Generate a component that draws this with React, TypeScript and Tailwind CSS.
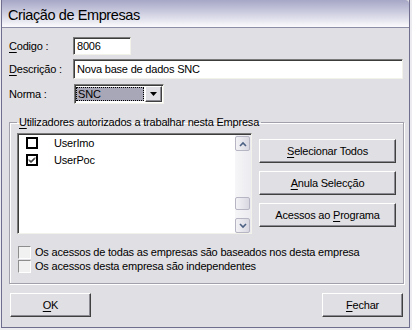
const sunken =
  'border border-t-[#7a7a7a] border-l-[#7a7a7a] border-r-[#f2f1ea] border-b-[#f2f1ea] shadow-[inset_1px_1px_0_#3c3c3c]'
const raised =
  'border border-t-white border-l-white border-r-[#404040] border-b-[#404040] shadow-[inset_-1px_-1px_0_#8c8b94]'

function Mn({ children }: { children: React.ReactNode }) {
  return <span className="underline underline-offset-[2px]">{children}</span>
}

function Btn({ children, className = '' }: { children: React.ReactNode; className?: string }) {
  return (
    <button className={`flex h-[24px] items-center justify-center bg-[#e0dfe3] ${raised} ${className}`}>
      {children}
    </button>
  )
}

function ListCheck({ checked }: { checked?: boolean }) {
  return (
    <span className="flex h-[12px] w-[12px] items-center justify-center border-2 border-black bg-white">
      {checked && (
        <svg width="8" height="8" viewBox="0 0 8 8">
          <path d="M1 3.5 L3 5.5 L7 1.5 M1 4.5 L3 6.5 L7 2.5" stroke="black" strokeWidth="1" fill="none" />
        </svg>
      )}
    </span>
  )
}

function Chevron({ up }: { up?: boolean }) {
  return (
    <svg width="8" height="6" viewBox="0 0 8 6">
      <path
        d={up ? 'M1 5 L4 2 L7 5' : 'M1 1 L4 4 L7 1'}
        stroke="#4d6185"
        strokeWidth="1.6"
        fill="none"
      />
    </svg>
  )
}

function ScrollBtn({ up }: { up?: boolean }) {
  return (
    <div className="flex h-[15px] w-[15px] items-center justify-center rounded-[2px] border border-[#b6b5c4] bg-linear-to-r from-[#f3f3f6] to-[#d9d8e2]">
      <Chevron up={up} />
    </div>
  )
}

function Check({ label }: { label: string }) {
  return (
    <label className="flex h-[14px] items-center gap-[4px]">
      <span className="h-[13px] w-[13px] border border-t-[#8d8d8d] border-l-[#8d8d8d] border-r-white border-b-white bg-[#f1f1f1]" />
      <span className="leading-[13px]">{label}</span>
    </label>
  )
}

export default function App() {
  return (
    <div className="h-[330px] w-[412px] bg-[#ecebf0] font-['Liberation_Sans',Arial,sans-serif] text-[11px] tracking-[-0.2px] text-black">
      <div className="ml-[1px] flex h-[328px] w-[409px] flex-col border-x border-b border-[#6f6e8e] bg-[#e0dfe3]">
        {/* title bar */}
        <div className="h-[28px] shrink-0 rounded-tr-[4px] border-b border-[#8e8da6] bg-linear-to-b from-[#a6a6c6] to-[#fbfbfd] pl-[6px] pt-[6px] text-[14.5px] leading-[18px] tracking-[-0.4px]">
          Criação de Empresas
        </div>

        <div className="flex flex-col pl-[7px]">
          <div className="mt-[9px] flex items-center">
            <span className="w-[64px]">
              <Mn>C</Mn>odigo :
            </span>
            <div className={`h-[18px] w-[58px] bg-white pl-[3px] leading-[16px] ${sunken}`}>8006</div>
          </div>

          <div className="mt-[4px] flex items-center">
            <span className="w-[64px]">
              <Mn>D</Mn>escrição :
            </span>
            <div className={`h-[20px] w-[330px] bg-white pl-[3px] leading-[18px] ${sunken}`}>
              Nova base de dados SNC
            </div>
          </div>

          <div className="mt-[5px] flex items-center">
            <span className="w-[65px]">Norma :</span>
            <div className={`flex h-[20px] w-[90px] items-center gap-[1px] bg-white py-[1px] pl-[1px] pr-[1px] ${sunken}`}>
              <div className="h-[14px] flex-1 border border-dotted border-black bg-[#a7a7b8] pl-[1px] leading-[12px]">
                SNC
              </div>
              <div className={`flex h-[16px] w-[17px] items-center justify-center bg-[#e0dfe3] ${raised}`}>
                <svg width="7" height="4" viewBox="0 0 7 4">
                  <path d="M0 0 H7 L3.5 4 Z" fill="black" />
                </svg>
              </div>
            </div>
          </div>

          <fieldset className="mt-[12px] w-[393px] border border-[#a2a1ab] px-[7px] pb-[10px] shadow-[inset_1px_1px_0_white,1px_1px_0_white]">
            <legend className="px-[2px] leading-[13px]">
              <Mn>U</Mn>tilizadores autorizados a trabalhar nesta Empresa
            </legend>
            <div className="mt-[4px] flex">
              <div className={`flex h-[101px] w-[235px] bg-white ${sunken} border-t-[#6a6a6a] shadow-[inset_1px_1px_0_#000]`}>
                <div className="flex flex-1 flex-col pl-[8px] pt-[3px]">
                  <div className="flex h-[17px] items-start">
                    <ListCheck />
                    <span className="ml-[16px] leading-[12px]">UserImo</span>
                  </div>
                  <div className="flex h-[17px] items-start">
                    <ListCheck checked />
                    <span className="ml-[16px] leading-[12px]">UserPoc</span>
                  </div>
                </div>
                <div className="mt-[1px] flex w-[16px] flex-col items-start bg-linear-to-r from-[#f6f6f8] to-[#ebebf0]">
                  <div className="mt-[1px]">
                    <ScrollBtn up />
                  </div>
                  <div className="flex-1" />
                  <div className="mb-[8px] h-[13px] w-[15px] rounded-[2px] border border-[#b6b5c4] bg-linear-to-r from-[#f3f3f6] to-[#d9d8e2]" />
                  <ScrollBtn />
                </div>
              </div>
              <div className="ml-[7px] flex w-[137px] flex-col gap-[8px] pt-[6px]">
                <Btn>
                  <span>
                    <Mn>S</Mn>elecionar Todos
                  </span>
                </Btn>
                <Btn>
                  <span>
                    <Mn>A</Mn>nula Selecção
                  </span>
                </Btn>
                <Btn>
                  <span>
                    Acessos ao <Mn>P</Mn>rograma
                  </span>
                </Btn>
              </div>
            </div>
            <div className="ml-[1px] mt-[11px] flex flex-col">
              <Check label="Os acessos de todas as empresas são baseados nos desta empresa" />
              <Check label="Os acessos desta empresa são independentes" />
            </div>
          </fieldset>
        </div>

        <div className="mt-[9px] flex w-[401px] justify-between pl-[8px]">
          <Btn className="w-[81px]">
            <span>
              <Mn>O</Mn>K
            </span>
          </Btn>
          <Btn className="w-[81px]">
            <span>
              <Mn>F</Mn>echar
            </span>
          </Btn>
        </div>
      </div>
    </div>
  )
}
